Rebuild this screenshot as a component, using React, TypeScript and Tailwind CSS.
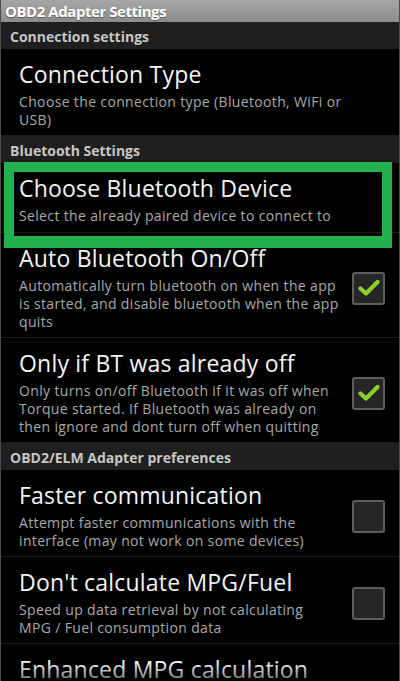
import React from 'react';

type Pref = {
  title: string;
  summary: string[];
  check?: 'on' | 'off';
  highlight?: boolean;
};

const sections: { header: string; items: Pref[] }[] = [
  {
    header: 'Connection settings',
    items: [
      {
        title: 'Connection Type',
        summary: ['Choose the connection type (Bluetooth, WiFi or', 'USB)'],
      },
    ],
  },
  {
    header: 'Bluetooth Settings',
    items: [
      {
        title: 'Choose Bluetooth Device',
        summary: ['Select the already paired device to connect to'],
        highlight: true,
      },
      {
        title: 'Auto Bluetooth On/Off',
        summary: [
          'Automatically turn bluetooth on when the app',
          'is started, and disable bluetooth when the app',
          'quits',
        ],
        check: 'on',
      },
      {
        title: 'Only if BT was already off',
        summary: [
          'Only turns on/off Bluetooth if it was off when',
          'Torque started. If Bluetooth was already on',
          'then ignore and dont turn off when quitting',
        ],
        check: 'on',
      },
    ],
  },
  {
    header: 'OBD2/ELM Adapter preferences',
    items: [
      {
        title: 'Faster communication',
        summary: ['Attempt faster communications with the', 'interface (may not work on some devices)'],
        check: 'off',
      },
      {
        title: "Don't calculate MPG/Fuel",
        summary: ['Speed up data retrieval by not calculating', 'MPG / Fuel consumption data'],
        check: 'off',
      },
      {
        title: 'Enhanced MPG calculation',
        summary: [],
      },
    ],
  },
];

const CheckBox = ({ checked }: { checked: boolean }) => (
  <div className="w-[33px] h-[33px] mt-[1px] shrink-0 rounded-[3px] border-2 border-[#5e5e5e] bg-[#262626] flex items-center justify-center">
    {checked && (
      <svg width="22" height="18" viewBox="0 0 22 18">
        <path d="M2.5 9.5 L8 14.5 L19.5 3" fill="none" stroke="#8ed02a" strokeWidth="4.2" strokeLinecap="round" strokeLinejoin="round" />
      </svg>
    )}
  </div>
);

const PrefRow = ({ item }: { item: Pref }) => (
  <div className={`relative flex items-center bg-black border-b border-[#1d1d1d] pl-[18px] pr-[14px] pt-[11px] ${item.highlight ? 'pb-[7px]' : 'pb-[6px]'}`}>
    <div className="flex-1 min-w-0">
      <div className="text-[23px] leading-[29px] text-[#f4f4f4] whitespace-nowrap tracking-[0.2px]">{item.title}</div>
      {item.summary.length > 0 && (
        <div className="mt-[4px] text-[14px] leading-[18px] text-[#a9a9a9] tracking-[0.35px]">
          {item.summary.map((line, i) => (
            <div key={i} className="whitespace-nowrap">{line}</div>
          ))}
        </div>
      )}
    </div>
    {item.check && <CheckBox checked={item.check === 'on'} />}
    {/* green annotation box */}
    {item.highlight && (
      <div className="absolute left-[3px] top-[-1px] w-[388px] h-[86px] border-[10px] border-[#22b14c] border-b-[12px] z-10"></div>
    )}
  </div>
);

export default function App() {
  return (
    <div
      className="w-[400px] h-[681px] overflow-hidden bg-black relative border-x border-[#4a4a4a]"
      style={{ fontFamily: '"Open Sans", "Noto Sans", sans-serif' }}
    >
      {/* Title bar */}
      <div className="h-[22px] bg-gradient-to-b from-[#a6a6a6] to-[#8c8c8c] pl-[4px] flex items-center">
        <span className="text-[15px] font-bold text-white leading-none tracking-[-0.45px] [text-shadow:0_1px_1px_rgba(0,0,0,0.35)]">
          OBD2 Adapter Settings
        </span>
      </div>

      {sections.map((s) => (
        <div key={s.header}>
          <div className="h-[27px] bg-[#1f1f1f] pl-[9px] pt-[6px] text-[14px] leading-[18px] font-bold text-[#c6c6c6]">
            {s.header}
          </div>
          {s.items.map((item) => (
            <PrefRow key={item.title} item={item} />
          ))}
        </div>
      ))}

      {/* fading edge at the bottom of the list */}
      <div className="absolute left-0 right-0 bottom-0 h-[18px] bg-gradient-to-b from-transparent to-[rgba(0,0,0,0.55)]"></div>
    </div>
  );
}
